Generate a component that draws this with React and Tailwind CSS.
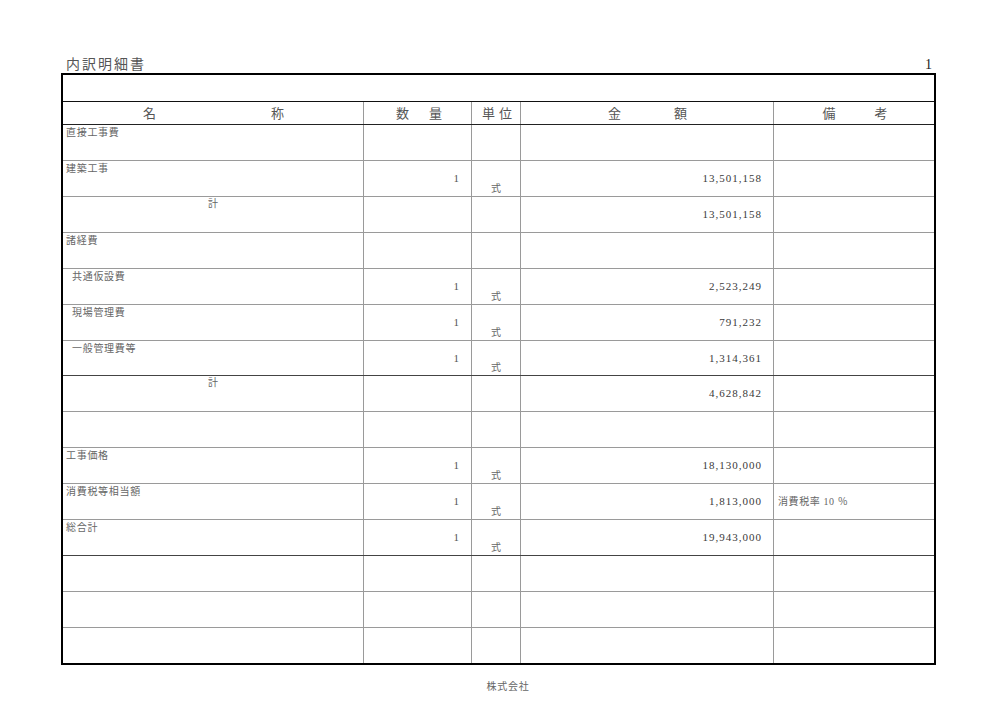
const rows = [
  { label: "直接工事費" },
  { label: "建築工事", qty: "1", unit: "式", amount: "13,501,158" },
  { sub: true, amount: "13,501,158" },
  { label: "諸経費" },
  { label: "共通仮設費", indent: true, qty: "1", unit: "式", amount: "2,523,249" },
  { label: "現場管理費", indent: true, qty: "1", unit: "式", amount: "791,232" },
  { label: "一般管理費等", indent: true, qty: "1", unit: "式", amount: "1,314,361", short: true, dark: true },
  { sub: true, amount: "4,628,842" },
  {},
  { label: "工事価格", qty: "1", unit: "式", amount: "18,130,000" },
  { label: "消費税等相当額", qty: "1", unit: "式", amount: "1,813,000", note: "消費税率 10 ％" },
  { label: "総合計", qty: "1", unit: "式", amount: "19,943,000", dark: true },
  {},
  {},
  { last: true },
];

const jp = { fontFamily: '"Liberation Serif", "Noto Sans CJK JP", serif' };

function Row({ row }) {
  const height = row.last ? "h-[35px]" : row.short ? "h-[35px]" : "h-[36px]";
  const border = row.last ? "" : row.dark ? "border-b border-[#444]" : "border-b border-[#9a9a9a]";

  return (
    <div className={`grid grid-cols-[301px_108px_49px_253px_160px] ${height} ${border}`}>
      {/* name */}
      <div className="border-r border-[#9a9a9a]">
        {row.sub ? (
          <div className="text-center pt-[1px] text-[10px] leading-[12px] text-[#666]">計</div>
        ) : (
          <div
            className={`${row.indent ? "pl-[9px]" : "pl-[3px]"} pt-[2px] text-[10px] leading-[12px] tracking-[0.7px] text-[#666]`}
          >
            {row.label}
          </div>
        )}
      </div>
      {/* qty */}
      <div className="border-r border-[#9a9a9a] flex items-center justify-end pr-[12px] text-[11px] text-[#555]">
        {row.qty}
      </div>
      {/* unit */}
      <div className="border-r border-[#9a9a9a] flex items-end justify-center pb-[1px] text-[10px] leading-[12px] text-[#666]">
        {row.unit}
      </div>
      {/* amount */}
      <div className="border-r border-[#9a9a9a] flex items-center justify-end pr-[11px] text-[11px] tracking-[1px] text-[#3a3a3a]">
        {row.amount}
      </div>
      {/* note */}
      <div className="flex items-center pl-[4px] text-[10px] tracking-[0.6px] text-[#666] whitespace-pre">
        {row.note}
      </div>
    </div>
  );
}

export default function App() {
  return (
    <div className="bg-white min-h-[707px] pt-[57px] pl-[61px]" style={jp}>
      {/* title line */}
      <div className="w-[875px] flex items-end justify-between pb-[1px]">
        <div className="pl-[5px] text-[14px] leading-[15px] tracking-[2px] text-[#555]">内訳明細書</div>
        <div className="pr-[4px] text-[14px] leading-[15px] text-[#222]">1</div>
      </div>

      {/* table */}
      <div className="w-[875px] border-2 border-black">
        <div className="h-[27px] border-b border-[#111]"></div>

        {/* header */}
        <div className="grid grid-cols-[301px_108px_49px_253px_160px] h-[23px] border-b border-[#222] text-[13px] leading-none text-[#555]">
          <div className="border-r border-[#9a9a9a] flex items-center justify-center gap-[115px] pl-[1px]">
            <span>名</span>
            <span>称</span>
          </div>
          <div className="border-r border-[#9a9a9a] flex items-center justify-center gap-[20px] pl-[3px]">
            <span>数</span>
            <span>量</span>
          </div>
          <div className="border-r border-[#9a9a9a] flex items-center justify-center gap-[4px] pl-[2px]">
            <span>単</span>
            <span>位</span>
          </div>
          <div className="border-r border-[#9a9a9a] flex items-center justify-center gap-[53px] pl-[1px]">
            <span>金</span>
            <span>額</span>
          </div>
          <div className="flex items-center justify-center gap-[39px] pl-[2px]">
            <span>備</span>
            <span>考</span>
          </div>
        </div>

        {rows.map((row, i) => (
          <Row key={i} row={row} />
        ))}
      </div>

      {/* footer */}
      <div className="w-[875px] mt-[16px] pl-[19px] text-center text-[10px] leading-[12px] tracking-[0.7px] text-[#666]">
        株式会社
      </div>
    </div>
  );
}
